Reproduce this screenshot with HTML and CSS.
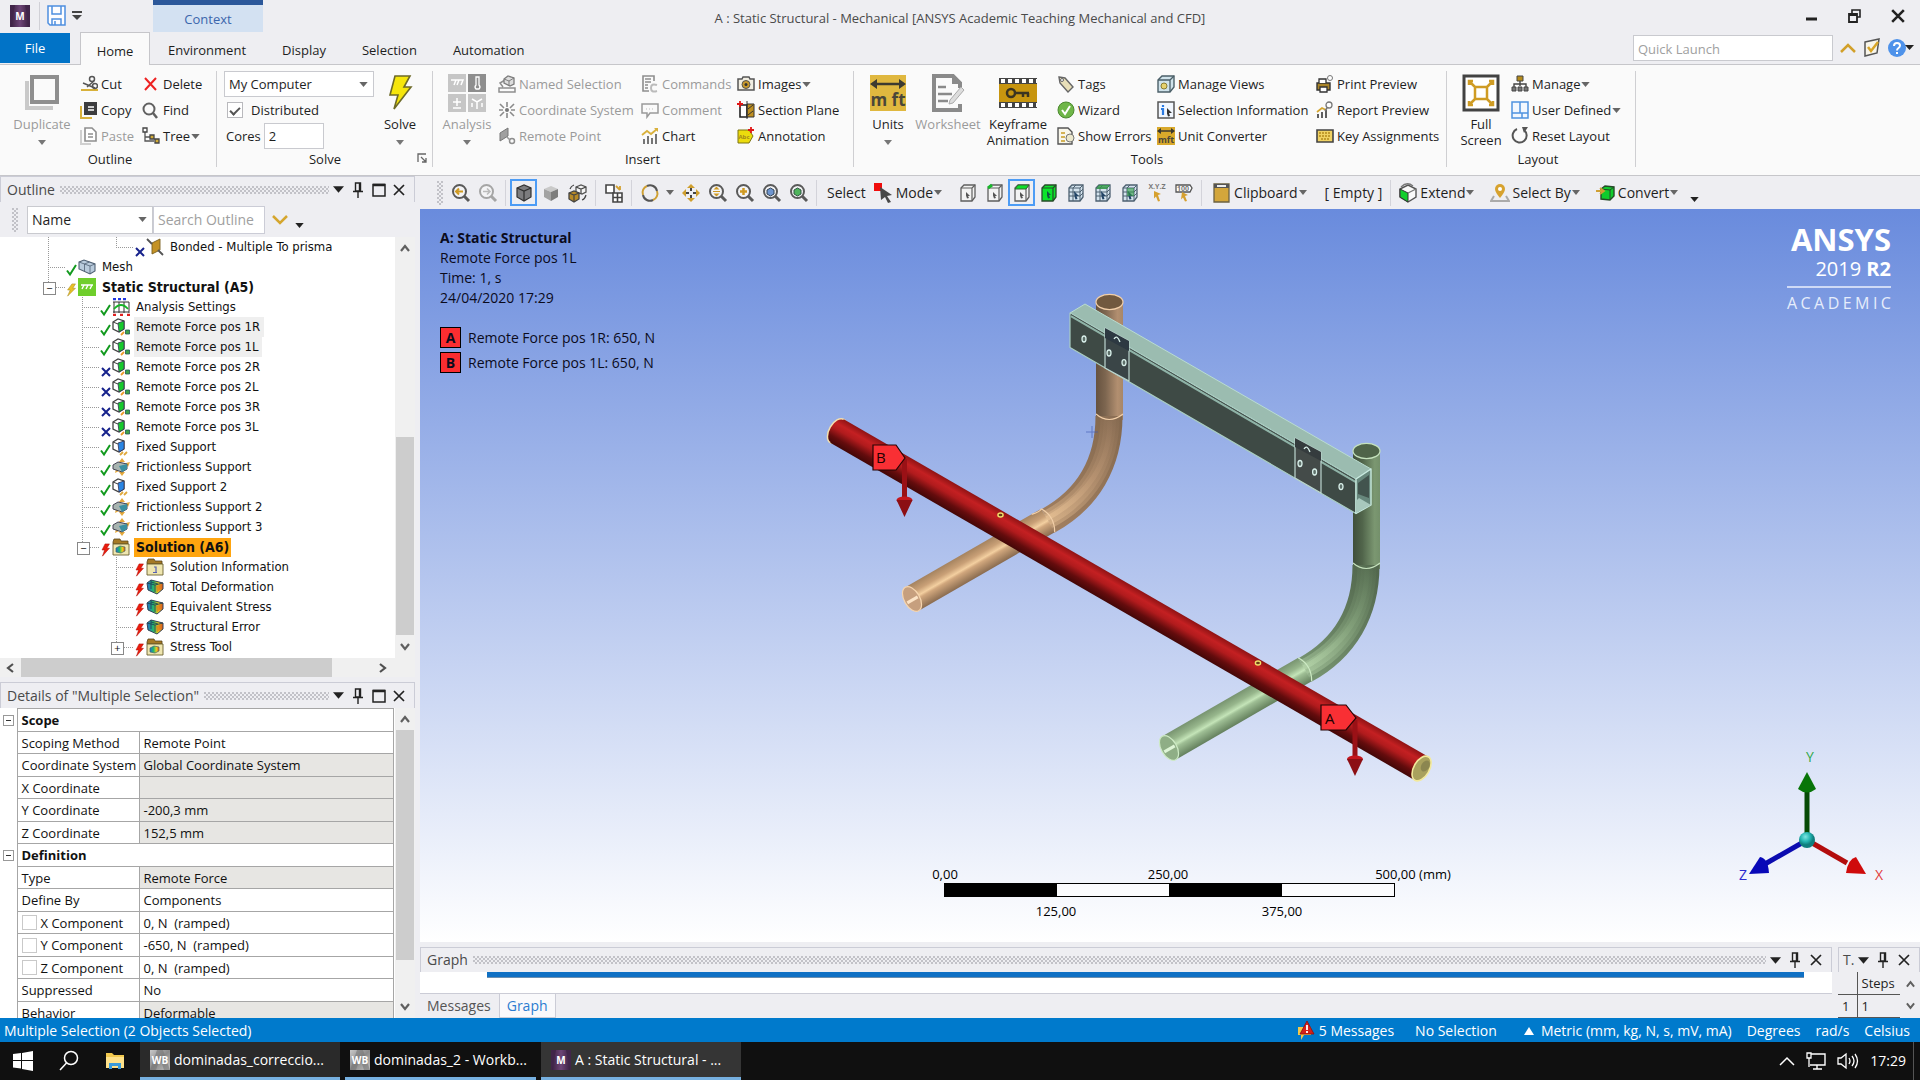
FILE: index.html
```html
<!DOCTYPE html>
<html lang="en">
<head>
<meta charset="utf-8">
<title>A : Static Structural - Mechanical</title>
<link rel="stylesheet" href="styles.css">
</head>
<body>
<svg class="sprite" aria-hidden="true">
  <defs>
    <linearGradient id="purple" x1="0" x2="1"><stop offset="0" stop-color="#3b2142"/><stop offset=".5" stop-color="#6d4577"/><stop offset="1" stop-color="#3b2142"/></linearGradient>
    <linearGradient id="rainbow" x1="0" x2="1"><stop offset="0" stop-color="#1c6fd0"/><stop offset=".4" stop-color="#25b86a"/><stop offset=".7" stop-color="#e8d21c"/><stop offset="1" stop-color="#e0521b"/></linearGradient>
    <linearGradient id="wbg" x1="0" x2="1" y2="1"><stop offset="0" stop-color="#c9c9c9"/><stop offset=".5" stop-color="#8a8a8a"/><stop offset="1" stop-color="#c2c2c2"/></linearGradient>
  </defs>
  <symbol id="down" viewBox="0 0 10 6"><path d="M0 0h10L5 6z" fill="currentColor"/></symbol>
  <symbol id="pin" viewBox="0 0 10 16"><path d="M2.500 1h5v8h-5zM0 9.500h10M5 10v6M6.500 1v8" fill="none" stroke="#222" stroke-width="1.400"/></symbol>
  <symbol id="max" viewBox="0 0 14 14"><path d="M1 1.500h12v11.500H1z" fill="none" stroke="#222" stroke-width="1.500"/><path d="M1 2h12" stroke="#222" stroke-width="2.500"/></symbol>
  <symbol id="close" viewBox="0 0 12 12"><path d="M1 1l10 10M11 1L1 11" stroke="#222" stroke-width="1.700"/></symbol>
  <symbol id="up-c" viewBox="0 0 10 8"><path d="M1 7l4-5 4 5" fill="none" stroke="#606060" stroke-width="2.200"/></symbol>
  <symbol id="dn-c" viewBox="0 0 10 8"><path d="M1 1l4 5 4-5" fill="none" stroke="#606060" stroke-width="2.200"/></symbol>
  <symbol id="lf-c" viewBox="0 0 8 10"><path d="M7 1L2 5l5 4" fill="none" stroke="#505050" stroke-width="2.200"/></symbol>
  <symbol id="rt-c" viewBox="0 0 8 10"><path d="M1 1l5 4-5 4" fill="none" stroke="#505050" stroke-width="2.200"/></symbol>
  <symbol id="ok" viewBox="0 0 11 12"><path d="M1 6.500l3 4L10 1" fill="none" stroke="#129a1e" stroke-width="2"/></symbol>
  <symbol id="no" viewBox="0 0 11 12"><path d="M2 4l8 8M10 4l-8 8" stroke="#17228c" stroke-width="2"/></symbol>
  <symbol id="redbolt" viewBox="0 0 11 16"><path d="M5 1h5L7 6h3L2 15l2.500-7H1.500z" fill="#ea1c0d" stroke="#b01208" stroke-width=".6"/></symbol>
  <symbol id="yelbolt" viewBox="0 0 11 16"><path d="M6 1h4L7 6h3L1 15l3-7H1z" fill="#e9c027" stroke="#a68a22" stroke-width=".6"/></symbol>
  <symbol id="rforce" viewBox="0 0 18 18"><path d="M1 4l5-3 6 2v8l-5 3-6-3z" fill="#fff" stroke="#444" stroke-width="1.300"/><path d="M6 5l6-2v8l-5 3z" fill="#16c92c" stroke="#335" stroke-width=".8"/><path d="M1 4l5 2" stroke="#444"/><path d="M13.500 12h4v4h-4z" fill="#3da64a" stroke="#255" stroke-width=".8"/><path d="M9 17l3-3" stroke="#eb9b2c" stroke-width="1.800"/></symbol>
  <symbol id="fixed" viewBox="0 0 18 18"><path d="M1 4l5-3 6 2v8l-5 3-6-3z" fill="#fff" stroke="#444" stroke-width="1.300"/><path d="M6 5l6-2v8l-5 3z" fill="#2a86e4" stroke="#335" stroke-width=".8"/><path d="M1 4l5 2" stroke="#444"/><path d="M8 17l3-3m1 3l3-3" stroke="#e0a93c" stroke-width="1.800"/></symbol>
  <symbol id="frict" viewBox="0 0 18 18"><path d="M10 0l3 4H7zM10 18l3-4H7zM18 4l-4 1L16 9zM3 15l4-2-3-2z" fill="#e5a93b"/><path d="M1 7l5-3 9 2v5l-5 3-9-3z" fill="#a8b4b0" stroke="#445" stroke-width="1"/><path d="M7 8l8-2v5l-5 3z" fill="#3a8fa0"/></symbol>
  <symbol id="folder" viewBox="0 0 18 18"><path d="M1 4l1-3h6l1 2h7v3H1z" fill="#a57a25" stroke="#59451c" stroke-width=".8"/><path d="M1 6h16v11H1z" fill="#efe6b0" stroke="#6c612f" stroke-width=".9"/></symbol>
  <symbol id="folderc" viewBox="0 0 18 18"><use href="#folder"/><path d="M4 10l4-2 5 1v4l-4 2-5-1z" fill="url(#rainbow)" stroke="#466" stroke-width=".7"/></symbol>
  <symbol id="folderi" viewBox="0 0 18 18"><use href="#folder"/><path d="M8 9h2v5M7 14.500h4" fill="none" stroke="#5660b0" stroke-width="1.200"/></symbol>
  <symbol id="result" viewBox="0 0 18 18"><path d="M1 5l4-3 12 3v6l-6 5-9-4z" fill="url(#rainbow)" stroke="#345" stroke-width="1"/><path d="M9 7l8-2M9 7v7M1 5l8 2M5 2v9M5 4l7 2" fill="none" stroke="#245" stroke-width=".9"/><path d="M10 8l6-2v4l-5 4z" fill="#dd6b1d" opacity=".65"/></symbol>
  <symbol id="mesh" viewBox="0 0 18 18"><path d="M1 4l5-2 11 4v7l-5 3L1 11z" fill="#b9cbdc" stroke="#4f6073" stroke-width="1.100"/><path d="M1 4l11 4 5-2M12 8v8M6.500 6v7M6.500 6l5-2" fill="none" stroke="#4f6073" stroke-width=".8"/></symbol>
  <symbol id="bond" viewBox="0 0 18 18"><path d="M6 5l8-4v11l-8 4z" fill="#c49225" stroke="#7b601f" stroke-width=".9"/><path d="M1 1l5 5M12 12l5 5" stroke="#555" stroke-width="1.800"/></symbol>
  <symbol id="static" viewBox="0 0 18 18"><path d="M0 0h18v18H0z" fill="#6fce2c"/><path d="M3 7h12M4 11l2-4m2 4l2-4m2 4l2-4" fill="none" stroke="#fff" stroke-width="1.400"/></symbol>
  <symbol id="aset" viewBox="0 0 18 18"><path d="M2 4v11M7 4v11M12 4v11M17 4v11M1 4h16M1 14h16" stroke="#333" stroke-width="1"/><path d="M2 11q7-8 14 0" fill="none" stroke="#16b328" stroke-width="1.800"/><path d="M1 1h3M6 1h3M11 1h3" stroke="#2036e0" stroke-width="2.500"/><path d="M1 17h3M8 17h3M15 17h3" stroke="#e02020" stroke-width="2.500"/></symbol>
  <symbol id="mag" viewBox="0 0 20 20"><circle cx="8.500" cy="8.500" r="6.500" fill="#f4f4f6" stroke="currentColor" stroke-width="2"/><path d="M13 13l5 5" stroke="currentColor" stroke-width="3"/></symbol>
  <symbol id="cube" viewBox="0 0 20 20"><path d="M3 5l7-3 7 3v9l-7 4-7-4z" fill="#7c7c7e" stroke="#333" stroke-width="1.200"/><path d="M3 5l7 3 7-3M10 8v10" fill="none" stroke="#2f2f2f" stroke-width="1.200"/></symbol>
  <symbol id="selcube" viewBox="0 0 20 20"><path d="M3 5l3-3h11v12l-3 4H3z" fill="#f3f3f3" stroke="#5f5f5f" stroke-width="1.300"/><path d="M3 5h11v13M14 5l3-3" fill="none" stroke="#5f5f5f" stroke-width="1.200"/><path d="M8 9l4 4h-2l1 2-2 .5-1-3z" fill="#555"/></symbol>
  <symbol id="meshcube" viewBox="0 0 20 20"><path d="M3 5l3-3h11v12l-3 4H3z" fill="#d4e3ee" stroke="#4d6070" stroke-width="1.300"/><path d="M3 5h11v13M14 5l3-3M7 5v13M3 9h11l3-3M3 13h11l3-3M7 5l3-3" fill="none" stroke="#4d6070" stroke-width="1"/><path d="M8 8l5 5H10.500l1 3-2 .5-1-3z" fill="#246"/></symbol>
</svg>

<header class="titlebar">
  <svg class="app-icon" viewBox="0 0 20 22"><path d="M0 0h20v22H0z" fill="#41254a"/><path d="M5 0h10l4 22H1z" fill="url(#purple)"/><text x="10" y="15" class="mark">M</text></svg>
  <span class="tb-sep"></span>
  <button class="plain" aria-label="Save"><svg width="19" height="22" viewBox="0 0 19 22"><path d="M1 1h17v19H3l-2-2z" fill="#fdfdff" stroke="#4e8fe0" stroke-width="1.500"/><path d="M5 1v8h9V1M5 20v-6h9v6M8 16v4" fill="none" stroke="#4e8fe0" stroke-width="1.500"/></svg></button>
  <button class="plain qat" aria-label="Customize"><svg width="10" height="10" viewBox="0 0 10 10"><path d="M0 1h10" stroke="#444" stroke-width="2"/><path d="M0 4h10L5 9z" fill="#444"/></svg></button>
  <div class="context-tab">Context</div>
  <h1>A : Static Structural - Mechanical [ANSYS Academic Teaching Mechanical and CFD]</h1>
  <div class="winbtns">
    <button class="plain" aria-label="Minimize"><svg width="12" height="16" viewBox="0 0 12 16"><path d="M0 11h11" stroke="#222" stroke-width="3"/></svg></button>
    <button class="plain" aria-label="Restore"><svg width="13" height="14" viewBox="0 0 13 14"><path d="M4 4V1h8v7H9" fill="none" stroke="#222" stroke-width="1.600"/><path d="M1 5h8v8H1zM1 6h8" fill="none" stroke="#222" stroke-width="1.800"/></svg></button>
    <button class="plain" aria-label="Close"><svg width="14" height="14" viewBox="0 0 12 12"><path d="M1 1l10 10M11 1L1 11" stroke="#222" stroke-width="2.200"/></svg></button>
  </div>
</header>

<nav class="tabs">
  <button class="file">File</button>
  <button class="tab active">Home</button>
  <button class="tab">Environment</button>
  <button class="tab">Display</button>
  <button class="tab">Selection</button>
  <button class="tab">Automation</button>
  <div class="quick">
    <input type="text" placeholder="Quick Launch" aria-label="Quick Launch">
    <button class="plain" aria-label="Collapse ribbon"><svg width="16" height="10" viewBox="0 0 16 10"><path d="M1 9l7-7 7 7" fill="none" stroke="#d2a02a" stroke-width="2.500"/></svg></button>
    <button class="plain" aria-label="Tasks"><svg width="18" height="20" viewBox="0 0 18 20"><path d="M2 4l14-3-2 14-12 3z" fill="#f8f5ea" stroke="#555" stroke-width="1.500"/><path d="M5 9l3 4 7-9" fill="none" stroke="#d8a528" stroke-width="2.500"/></svg></button>
    <button class="plain help" aria-label="Help"><svg width="26" height="20" viewBox="0 0 26 20"><circle cx="9" cy="10" r="9" fill="#4e92ea"/><path d="M6 8q0-3 3-3t3 2.500q0 1.500-1.500 2.500T9 12.500M9 14v2" fill="none" stroke="#fff" stroke-width="2"/><path d="M17 7h9l-4.500 5z" fill="#222"/></svg></button>
  </div>
</nav>

<section class="ribbon">
  <div class="group g-outline">
    <div class="cols">
      <button class="big off"><svg width="36" height="36" viewBox="0 0 36 36"><path d="M3 6v27h26" fill="none" stroke="#c9c9c9" stroke-width="4"/><path d="M8 2h25v25H8z" fill="#fafafa" stroke="#8e8e8e" stroke-width="4"/></svg><span>Duplicate</span><svg class="dn"><use href="#down"/></svg></button>
      <div class="col">
        <button class="item"><svg class="ic" viewBox="0 0 18 18"><path d="M1 15h17" stroke="#d8b13a" stroke-width="2"/><path d="M3 8l12 5M14 6L7 12" stroke="#555" stroke-width="1.500"/><circle cx="12" cy="4" r="2.500" fill="none" stroke="#555" stroke-width="1.500"/><circle cx="15" cy="11" r="2.500" fill="none" stroke="#555" stroke-width="1.500"/></svg>Cut</button>
        <button class="item"><svg class="ic" viewBox="0 0 18 18"><path d="M1 5v12h11" fill="none" stroke="#d8b13a" stroke-width="2"/><path d="M4 1h13v13H4z" fill="#3c3c3e"/><path d="M8 6h6M8 9h6" stroke="#fff" stroke-width="1.500"/></svg>Copy</button>
        <button class="item off"><svg class="ic" viewBox="0 0 18 18"><path d="M1 3v14h10" fill="none" stroke="#cfcfcf" stroke-width="2"/><path d="M5 1h7l4 4v9H5z" fill="#fff" stroke="#8e8e8e" stroke-width="1.600"/><path d="M8 7h5M8 10h5" stroke="#8e8e8e" stroke-width="1.400"/></svg>Paste</button>
      </div>
      <div class="col">
        <button class="item"><svg class="ic" viewBox="0 0 18 18"><path d="M3 3l11 12M14 3L3 15" stroke="#ee2222" stroke-width="2"/></svg>Delete</button>
        <button class="item"><svg class="ic" viewBox="0 0 18 18"><circle cx="7" cy="8" r="5.500" fill="none" stroke="#606060" stroke-width="2"/><path d="M11 12l4 5" stroke="#606060" stroke-width="2.500"/></svg>Find</button>
        <button class="item"><svg class="ic" viewBox="0 0 18 18"><path d="M3 5v9h9M3 10h5" fill="none" stroke="#555" stroke-width="1.300"/><path d="M1 1h4v4H1z" fill="#fff" stroke="#444" stroke-width="1.300"/><path d="M8 8h4v4H8zM13 12h4v4h-4z" fill="#d1ab36" stroke="#444" stroke-width="1.300"/></svg>Tree<svg class="sm"><use href="#down"/></svg></button>
      </div>
    </div>
    <h2>Outline</h2>
  </div>
  <div class="group g-solve">
    <div class="cols">
      <div class="col form">
        <div class="selwrap"><select aria-label="Solve target"><option>My Computer</option></select><svg class="sm"><use href="#down"/></svg></div>
        <label class="check"><input type="checkbox" checked>Distributed</label>
        <label class="cores">Cores<input type="text" value="2"></label>
      </div>
      <button class="big"><svg width="26" height="36" viewBox="0 0 26 36"><path d="M8 1h15l-6 11h7L7 34l4-14H3z" fill="#f6e60c" stroke="#6d6a28" stroke-width="1.600"/></svg><span>Solve</span><svg class="dn"><use href="#down"/></svg></button>
    </div>
    <h2>Solve</h2>
    <svg class="launch" width="10" height="10" viewBox="0 0 10 10"><path d="M1 9V1h8M4 4l5 5M9 5v4H5" fill="none" stroke="#666" stroke-width="1.300"/></svg>
  </div>
  <div class="group g-insert">
    <div class="cols">
      <button class="big off"><svg width="38" height="38" viewBox="0 0 38 38"><path d="M0 0h18v18H0zM0 20h18v18H0zM20 20h18v18H20z" fill="#c6c6c6"/><path d="M20 0h18v18H20z" fill="#8e8e8e"/><path d="M3 6h12l-2 5M6 11l2-5m1 5l2-5M9 24v8M5 28h8M5 34h8M24 25l5 3 5-3M29 28v7M24 29v4M34 29v4" fill="none" stroke="#fff" stroke-width="1.500"/><path d="M28 3h3v8q2 2 0 4h-3q-2-2 0-4z" fill="none" stroke="#fff" stroke-width="1.300"/></svg><span>Analysis</span><svg class="dn"><use href="#down"/></svg></button>
      <div class="col off">
        <button class="item"><svg class="ic" viewBox="0 0 18 18"><path d="M1 13h16v4H1zM5 12L2 8l5-3" fill="none" stroke="#8e8e8e" stroke-width="1.500"/><path d="M6 4l4-3 6 2v6l-4 2-6-3z" fill="#ddd" stroke="#7d7d7d" stroke-width="1.300"/><path d="M6 4l5 2 5-3M11 6v5" fill="none" stroke="#7d7d7d"/></svg>Named Selection</button>
        <button class="item"><svg class="ic" viewBox="0 0 18 18"><path d="M9 1v5M9 12v5M2 3l4 4M12 11l4 4M16 3l-4 4M6 11l-4 4M1 9h4M13 9h4" stroke="#8a8a8a" stroke-width="1.600"/><circle cx="9" cy="9" r="2" fill="#777"/></svg>Coordinate System</button>
        <button class="item"><svg class="ic" viewBox="0 0 18 18"><path d="M2 6l8-5v8l-8 5z" fill="#a0a0a0" stroke="#777"/><circle cx="14" cy="14" r="2.500" fill="none" stroke="#8e8e8e" stroke-width="1.500"/><path d="M9 10l3 3" stroke="#999" stroke-width="1.500"/></svg>Remote Point</button>
      </div>
      <div class="col">
        <button class="item off"><svg class="ic" viewBox="0 0 18 18"><path d="M13 6V1H2v15h6" fill="none" stroke="#8e8e8e" stroke-width="1.600"/><path d="M4 4h6M4 7h6M4 10h3M4 13h3" stroke="#8e8e8e" stroke-width="1.400"/><path d="M16 10q-6-2-6 3t6 3" fill="none" stroke="#bbb" stroke-width="2"/></svg>Commands</button>
        <button class="item off"><svg class="ic" viewBox="0 0 18 18"><path d="M1 3h16v9H9l-3 4v-4H1z" fill="none" stroke="#9a9a9a" stroke-width="1.500"/><path d="M5 8h8" stroke="#bbb" stroke-dasharray="1 2"/></svg>Comment</button>
        <button class="item"><svg class="ic" viewBox="0 0 18 18"><path d="M1 8l5-4 4 3 6-5" fill="none" stroke="#d9b13c" stroke-width="1.800"/><path d="M13 1h4v4z" fill="#d9b13c"/><path d="M3 17v-5M7 17V9M11 17v-6M15 17V7" stroke="#555" stroke-width="1.600"/></svg>Chart</button>
      </div>
      <div class="col">
        <button class="item"><svg class="ic" viewBox="0 0 18 18"><path d="M1 4h4l1-2h6l1 2h4v11H1z" fill="#f1eee2" stroke="#555" stroke-width="1.500"/><circle cx="9" cy="9.500" r="4" fill="#c9992a" stroke="#555"/><circle cx="9" cy="9.500" r="1.500" fill="#333"/></svg>Images<svg class="sm"><use href="#down"/></svg></button>
        <button class="item"><svg class="ic" viewBox="0 0 18 18"><path d="M3 4h7v12H3z" fill="#fff" stroke="#222" stroke-width="1.600"/><path d="M10 3h7v13h-7z" fill="#c09021" stroke="#333"/><path d="M10 0v18M11 8l5-4M11 14l5-4" stroke="#333"/><path d="M3 0v6M0 3h6" stroke="#e01818" stroke-width="1.800"/></svg>Section Plane</button>
        <button class="item"><svg class="ic" viewBox="0 0 18 18"><path d="M1 3h11l4 6-4 7H1z" fill="#ecdc0d" stroke="#7c7412"/><text x="7" y="12" class="abc">Abc</text><path d="M14 0v6M11 3h6" stroke="#e01818" stroke-width="1.800"/></svg>Annotation</button>
      </div>
    </div>
    <h2>Insert</h2>
  </div>
  <div class="group g-tools">
    <div class="cols">
      <button class="big"><svg width="36" height="36" viewBox="0 0 36 36"><path d="M0 0h36v36H0z" fill="#e0b83f"/><path d="M4 9h28" stroke="#3c3a30" stroke-width="2.500"/><path d="M0 9l7-5v10zM36 9l-7-5v10z" fill="#3c3a30"/><text x="18" y="31" class="mft">m ft</text></svg><span>Units</span><svg class="dn"><use href="#down"/></svg></button>
      <button class="big off"><svg width="36" height="38" viewBox="0 0 36 38"><path d="M30 14V9l-7-7H4v34h26v-6" fill="none" stroke="#8a8a8a" stroke-width="4"/><path d="M22 1v9h8" fill="#8a8a8a"/><path d="M8 13h8M8 20h14M8 27h10" stroke="#8a8a8a" stroke-width="2.500"/><path d="M20 26l11-13 3 3-11 13-4 1z" fill="#ddd" stroke="#aaa"/></svg><span>Worksheet</span></button>
      <button class="big"><svg width="38" height="38" viewBox="0 0 38 38"><path d="M0 4h38v30H0z" fill="#444"/><path d="M0 10h38v18H0z" fill="#c7950f"/><path d="M2 7h36M2 31h36" stroke="#fff" stroke-width="4" stroke-dasharray="4 3"/><circle cx="12" cy="19" r="4" fill="none" stroke="#3b3420" stroke-width="2.500"/><path d="M16 19h14M24 19v4M29 19v4" stroke="#3b3420" stroke-width="2.500"/></svg><span>Keyframe<br>Animation</span></button>
      <div class="col">
        <button class="item"><svg class="ic" viewBox="0 0 18 18"><path d="M2 2l6 1 8 9-5 5-8-9z" fill="#e8dfb8" stroke="#666" stroke-width="1.400"/><circle cx="5" cy="5" r="1.500" fill="#fff" stroke="#666"/></svg>Tags</button>
        <button class="item"><svg class="ic" viewBox="0 0 18 18"><circle cx="9" cy="9" r="8" fill="#6fb648" stroke="#4c8a30"/><path d="M5 9l3 4 5-8" fill="none" stroke="#fff" stroke-width="2"/></svg>Wizard</button>
        <button class="item"><svg class="ic" viewBox="0 0 18 18"><path d="M1 1h10l4 4v12H1z" fill="#f8f6ea" stroke="#555" stroke-width="1.400"/><path d="M4 6h4M4 10h4M4 14h4" stroke="#c79c25" stroke-width="1.600"/><circle cx="13" cy="11" r="4" fill="#ece8cd" stroke="#777"/></svg>Show Errors</button>
      </div>
      <div class="col">
        <button class="item"><svg class="ic" viewBox="0 0 18 18"><path d="M1 5l4-4h12v11l-4 5H1z" fill="#cfe2ea" stroke="#4b5f68" stroke-width="1.400"/><path d="M1 5h12v12M13 5l4-4" fill="none" stroke="#4b5f68" stroke-width="1.300"/><circle cx="7" cy="11" r="3" fill="#e6d26e" stroke="#8c7c2e"/></svg>Manage Views</button>
        <button class="item"><svg class="ic" viewBox="0 0 18 18"><path d="M1 1h16v16H1z" fill="#f1f6fd" stroke="#555" stroke-width="1.500"/><path d="M4 8h2v6M6 4v2" fill="none" stroke="#2b7ae0" stroke-width="2.200"/><path d="M10 7l5 5h-3l1 3-2 .5-1-3z" fill="#333"/></svg>Selection Information</button>
        <button class="item"><svg class="ic" viewBox="0 0 18 18"><path d="M0 0h18v18H0z" fill="#d9a92b"/><path d="M3 4h12" stroke="#3c3a30" stroke-width="1.500"/><path d="M0 4l4-3v6zM18 4l-4-3v6z" fill="#3c3a30"/><text x="9" y="16" class="mft-s">mft</text></svg>Unit Converter</button>
      </div>
      <div class="col">
        <button class="item"><svg class="ic" viewBox="0 0 18 18"><path d="M1 8h13v7H1z" fill="#a98428" stroke="#333" stroke-width="1.400"/><path d="M3 8V4h7v4M4 12h7v5H4z" fill="#fff" stroke="#333" stroke-width="1.300"/><circle cx="14" cy="3" r="2.500" fill="#fff" stroke="#777"/></svg>Print Preview</button>
        <button class="item"><svg class="ic" viewBox="0 0 18 18"><path d="M2 17v-4M6 17v-6M10 17V9" stroke="#444" stroke-width="1.700"/><path d="M1 11l5-4 4 2" fill="none" stroke="#d3a52f" stroke-width="1.700"/><circle cx="13" cy="4" r="3" fill="#fff" stroke="#777" stroke-width="1.300"/><path d="M11 7l-2 3" stroke="#777" stroke-width="1.500"/></svg>Report Preview</button>
        <button class="item"><svg class="ic" viewBox="0 0 18 18"><path d="M1 3h16v12H1z" fill="#f0d263" stroke="#444" stroke-width="1.600"/><path d="M3 6h12M3 9h12M5 12h8" stroke="#b48b1c" stroke-width="1.500" stroke-dasharray="2 1"/></svg>Key Assignments</button>
      </div>
    </div>
    <h2>Tools</h2>
  </div>
  <div class="group g-layout">
    <div class="cols">
      <button class="big"><svg width="38" height="38" viewBox="0 0 38 38"><path d="M2 2h34v34H2z" fill="#fff" stroke="#424242" stroke-width="3"/><path d="M13 13h12v12H13zM13 13L8 8M25 13l5-5M13 25l-5 5M25 25l5 5M7 11V7h4M27 7h4v4M7 27v4h4M27 31h4v-4" fill="none" stroke="#cf9c24" stroke-width="2.500"/></svg><span>Full<br>Screen</span></button>
      <div class="col">
        <button class="item"><svg class="ic" viewBox="0 0 18 18"><path d="M9 5v6M3 13V9h12v4" fill="none" stroke="#444" stroke-width="1.400"/><path d="M6 1h6v5H6z" fill="#b58b1a" stroke="#444"/><path d="M1 12h4v4H1zM7 12h4v4H7zM13 12h4v4h-4z" fill="#777" stroke="#444"/></svg>Manage<svg class="sm"><use href="#down"/></svg></button>
        <button class="item"><svg class="ic" viewBox="0 0 18 18"><path d="M1 1h16v16H1zM9 1v11M1 12h16M11 12v5" fill="#f2f7fe" stroke="#4f92e0" stroke-width="1.500"/></svg>User Defined<svg class="sm"><use href="#down"/></svg></button>
        <button class="item"><svg class="ic" viewBox="0 0 18 18"><path d="M6 2a7 7 0 1 0 7 1" fill="none" stroke="#555" stroke-width="2"/><path d="M11 0h6l-4 6z" fill="#555"/></svg>Reset Layout</button>
      </div>
    </div>
    <h2>Layout</h2>
  </div>
</section>

<main class="work">
  <aside class="left">
    <section class="outline">
      <div class="phead"><span>Outline</span><i class="dots"></i><svg class="h-dn"><use href="#down"/></svg><svg class="h-pin"><use href="#pin"/></svg><svg class="h-max"><use href="#max"/></svg><svg class="h-x"><use href="#close"/></svg></div>
      <div class="filter">
        <i class="grip"></i>
        <div class="selwrap"><select aria-label="Filter by"><option>Name</option></select><svg class="sm"><use href="#down"/></svg></div>
        <input type="text" placeholder="Search Outline" aria-label="Search Outline">
        <svg width="16" height="10" viewBox="0 0 16 10"><path d="M1 1l7 7 7-7" fill="none" stroke="#d5a62e" stroke-width="2.500"/></svg>
        <svg class="more"><use href="#down"/></svg>
      </div>
      <div class="treewrap">
        <div class="tree">
          <div class="row"><i class="g v"></i><i class="g"></i><i class="t e"></i><svg class="st"><use href="#no"/></svg><svg class="ic"><use href="#bond"/></svg><span>Bonded - Multiple To prisma</span></div>
          <div class="row"><i class="t"></i><svg class="st"><use href="#ok"/></svg><svg class="ic"><use href="#mesh"/></svg><span>Mesh</span></div>
          <div class="row"><i class="t e x"></i><svg class="st"><use href="#yelbolt"/></svg><svg class="ic"><use href="#static"/></svg><span class="b">Static Structural (A5)</span></div>
          <div class="row"><i class="g"></i><i class="t"></i><svg class="st"><use href="#ok"/></svg><svg class="ic"><use href="#aset"/></svg><span>Analysis Settings</span></div>
          <div class="row"><i class="g"></i><i class="t"></i><svg class="st"><use href="#ok"/></svg><svg class="ic"><use href="#rforce"/></svg><span class="hl">Remote Force pos 1R</span></div>
          <div class="row"><i class="g"></i><i class="t"></i><svg class="st"><use href="#ok"/></svg><svg class="ic"><use href="#rforce"/></svg><span class="hl">Remote Force pos 1L</span></div>
          <div class="row"><i class="g"></i><i class="t"></i><svg class="st"><use href="#no"/></svg><svg class="ic"><use href="#rforce"/></svg><span>Remote Force pos 2R</span></div>
          <div class="row"><i class="g"></i><i class="t"></i><svg class="st"><use href="#no"/></svg><svg class="ic"><use href="#rforce"/></svg><span>Remote Force pos 2L</span></div>
          <div class="row"><i class="g"></i><i class="t"></i><svg class="st"><use href="#no"/></svg><svg class="ic"><use href="#rforce"/></svg><span>Remote Force pos 3R</span></div>
          <div class="row"><i class="g"></i><i class="t"></i><svg class="st"><use href="#no"/></svg><svg class="ic"><use href="#rforce"/></svg><span>Remote Force pos 3L</span></div>
          <div class="row"><i class="g"></i><i class="t"></i><svg class="st"><use href="#ok"/></svg><svg class="ic"><use href="#fixed"/></svg><span>Fixed Support</span></div>
          <div class="row"><i class="g"></i><i class="t"></i><svg class="st"><use href="#ok"/></svg><svg class="ic"><use href="#frict"/></svg><span>Frictionless Support</span></div>
          <div class="row"><i class="g"></i><i class="t"></i><svg class="st"><use href="#ok"/></svg><svg class="ic"><use href="#fixed"/></svg><span>Fixed Support 2</span></div>
          <div class="row"><i class="g"></i><i class="t"></i><svg class="st"><use href="#ok"/></svg><svg class="ic"><use href="#frict"/></svg><span>Frictionless Support 2</span></div>
          <div class="row"><i class="g"></i><i class="t"></i><svg class="st"><use href="#ok"/></svg><svg class="ic"><use href="#frict"/></svg><span>Frictionless Support 3</span></div>
          <div class="row"><i class="g"></i><i class="t e x"></i><svg class="st"><use href="#redbolt"/></svg><svg class="ic"><use href="#folderc"/></svg><span class="b cur">Solution (A6)</span></div>
          <div class="row"><i class="g"></i><i class="g"></i><i class="t"></i><svg class="st"><use href="#redbolt"/></svg><svg class="ic"><use href="#folderi"/></svg><span>Solution Information</span></div>
          <div class="row"><i class="g"></i><i class="g"></i><i class="t"></i><svg class="st"><use href="#redbolt"/></svg><svg class="ic"><use href="#result"/></svg><span>Total Deformation</span></div>
          <div class="row"><i class="g"></i><i class="g"></i><i class="t"></i><svg class="st"><use href="#redbolt"/></svg><svg class="ic"><use href="#result"/></svg><span>Equivalent Stress</span></div>
          <div class="row"><i class="g"></i><i class="g"></i><i class="t"></i><svg class="st"><use href="#redbolt"/></svg><svg class="ic"><use href="#result"/></svg><span>Structural Error</span></div>
          <div class="row"><i class="g"></i><i class="g"></i><i class="t e x plus"></i><svg class="st"><use href="#redbolt"/></svg><svg class="ic"><use href="#folderc"/></svg><span>Stress Tool</span></div>
        </div>
        <div class="vbar low"><svg><use href="#up-c"/></svg><i></i><svg><use href="#dn-c"/></svg></div>
      </div>
      <div class="hbar"><svg><use href="#lf-c"/></svg><i></i><svg><use href="#rt-c"/></svg></div>
    </section>

    <section class="details">
      <div class="phead"><span>Details of "Multiple Selection"</span><i class="dots"></i><svg class="h-dn"><use href="#down"/></svg><svg class="h-pin"><use href="#pin"/></svg><svg class="h-max"><use href="#max"/></svg><svg class="h-x"><use href="#close"/></svg></div>
      <div class="gridwrap">
        <div class="gridclip">
        <table class="props">
          <colgroup><col class="c0"><col class="c1"><col></colgroup>
          <tr><td class="gut"><i class="box"></i></td><th colspan="2">Scope</th></tr>
          <tr><td class="gut"></td><td>Scoping Method</td><td>Remote Point</td></tr>
          <tr><td class="gut"></td><td>Coordinate System</td><td class="ro">Global Coordinate System</td></tr>
          <tr><td class="gut"></td><td>X Coordinate</td><td class="ro"></td></tr>
          <tr><td class="gut"></td><td>Y Coordinate</td><td class="ro">-200,3 mm</td></tr>
          <tr><td class="gut"></td><td>Z Coordinate</td><td class="ro">152,5 mm</td></tr>
          <tr><td class="gut"><i class="box"></i></td><th colspan="2">Definition</th></tr>
          <tr><td class="gut"></td><td>Type</td><td class="ro">Remote Force</td></tr>
          <tr><td class="gut"></td><td>Define By</td><td>Components</td></tr>
          <tr><td class="gut"></td><td><label><input type="checkbox">X Component</label></td><td>0, N&nbsp; (ramped)</td></tr>
          <tr><td class="gut"></td><td><label><input type="checkbox">Y Component</label></td><td>-650, N&nbsp; (ramped)</td></tr>
          <tr><td class="gut"></td><td><label><input type="checkbox">Z Component</label></td><td>0, N&nbsp; (ramped)</td></tr>
          <tr><td class="gut"></td><td>Suppressed</td><td>No</td></tr>
          <tr><td class="gut"></td><td>Behavior</td><td class="ro">Deformable</td></tr>
        </table>
        </div>
        <div class="vbar high"><svg><use href="#up-c"/></svg><i></i><svg><use href="#dn-c"/></svg></div>
      </div>
    </section>
  </aside>

  <section class="right">
    <div class="toolbar">
      <i class="grip"></i>
      <button class="tool" aria-label="Previous view"><svg viewBox="0 0 20 20" color="#5a5a5a"><use href="#mag"/><path d="M5 8.500h7M8 5.500l-3 3 3 3" fill="none" stroke="#cf9a22" stroke-width="2"/></svg></button>
      <button class="tool" aria-label="Next view"><svg viewBox="0 0 20 20" color="#a5a5a5"><use href="#mag"/><path d="M5 8.500h7M9 5.500l3 3-3 3" fill="none" stroke="#bbb" stroke-width="1.500"/></svg></button>
      <i class="s"></i>
      <button class="tool on" aria-label="Shaded with edges"><svg><use href="#cube"/></svg></button>
      <button class="tool" aria-label="Shaded"><svg viewBox="0 0 20 20"><path d="M3 6l7-3 7 3-7 3z" fill="#c9c9c9"/><path d="M3 6l7 3v9l-7-4z" fill="#a3a3a3"/><path d="M17 6l-7 3v9l7-4z" fill="#7d7d7d"/></svg></button>
      <button class="tool" aria-label="Rotate object"><svg viewBox="0 0 20 20"><path d="M8 4l5-2 5 2v5l-4 2-6-2z" fill="#f5f5f5" stroke="#555" stroke-width="1.300"/><path d="M1 10l5-2 5 2v6l-5 3-5-3z" fill="#b88a26" stroke="#444" stroke-width="1.300"/><path d="M1 10l5 2 5-2M6 12v7M8 4l5 2 5-2M13 6v5M2 6q1-3 4-4M18 12q-1 4-4 5" fill="none" stroke="#444" stroke-width="1.200"/></svg></button>
      <i class="s"></i>
      <button class="tool" aria-label="Viewports"><svg viewBox="0 0 20 20"><path d="M2 2h8v8H2z" fill="#fff" stroke="#444" stroke-width="1.600"/><path d="M9 10h9v9H9zM13.500 10v9M9 14.500h9" fill="#fff" stroke="#444" stroke-width="1.600"/><path d="M12 3l4 4M16 3v4" stroke="#d2a030" stroke-width="1.800"/></svg></button>
      <i class="s"></i>
      <button class="tool" aria-label="Rotate"><svg viewBox="0 0 20 20"><path d="M3 12a7 7 0 0 1 4-9M17 8a7 7 0 0 1-4 9" fill="none" stroke="#cfa033" stroke-width="2"/><path d="M7 3a7 7 0 0 1 10 5M13 17a7 7 0 0 1-10-5" fill="none" stroke="#555" stroke-width="2"/></svg></button>
      <button class="tool slim" aria-label="Rotate options"><svg class="sm"><use href="#down"/></svg></button>
      <button class="tool" aria-label="Pan"><svg viewBox="0 0 20 20"><path d="M10 1l4 4H6zM10 19l4-4H6zM1 10l4-4v8zM19 10l-4-4v8z" fill="#cf9f2e"/><path d="M10 5v3M10 12v3M5 10h3M12 10h3" stroke="#444" stroke-width="2"/></svg></button>
      <button class="tool" aria-label="Zoom"><svg viewBox="0 0 20 20" color="#5a5a5a"><use href="#mag"/><path d="M8.500 3.500l3 3h-6zM8.500 13.500l3-3h-6z" fill="#cf9a22"/><path d="M5 8.500h7" stroke="#cf9a22"/></svg></button>
      <button class="tool" aria-label="Box zoom"><svg viewBox="0 0 20 20" color="#5a5a5a"><use href="#mag"/><path d="M5 8.500h7M8.500 5v7" stroke="#cf9a22" stroke-width="2.500"/></svg></button>
      <button class="tool" aria-label="Zoom to fit"><svg viewBox="0 0 20 20" color="#5a5a5a"><use href="#mag"/><path d="M5 7l3.500-2L12 7v4l-3.500 2L5 11z" fill="#6f95cf" stroke="#345"/></svg></button>
      <button class="tool" aria-label="Zoom to selection"><svg viewBox="0 0 20 20" color="#5a5a5a"><use href="#mag"/><path d="M5 7l3.500-2L12 7v4l-3.500 2L5 11z" fill="#4fb45c" stroke="#354"/></svg></button>
      <i class="s"></i>
      <span class="lbl">Select</span>
      <button class="drop mode"><svg viewBox="0 0 20 20"><path d="M0 0h8v8H0z" fill="#f00c0c"/><path d="M6 4l12 8-5 1 4 6-3 1-3-6-4 3z" fill="#484848"/></svg>Mode<svg class="sm"><use href="#down"/></svg></button>
      <button class="tool" aria-label="Vertex"><svg><use href="#selcube"/></svg></button>
      <button class="tool" aria-label="Edge"><svg viewBox="0 0 20 20"><use href="#selcube"/><path d="M3 5l4-3" stroke="#17b82b" stroke-width="3"/></svg></button>
      <button class="tool on" aria-label="Face"><svg viewBox="0 0 20 20"><use href="#selcube"/><path d="M3 6l3-4h11l-3 4z" fill="#0ee02a" stroke="#363"/></svg></button>
      <button class="tool" aria-label="Body"><svg viewBox="0 0 20 20"><path d="M3 5l3-3h11v12l-3 4H3z" fill="#0ce42b" stroke="#274b2a" stroke-width="1.300"/><path d="M3 5h11v13M14 5l3-3" fill="none" stroke="#274b2a" stroke-width="1.200"/><path d="M8 8l4 4H10l1 3-2 .5-1-3z" fill="#154"/></svg></button>
      <button class="tool" aria-label="Node"><svg><use href="#meshcube"/></svg></button>
      <button class="tool" aria-label="Element face"><svg viewBox="0 0 20 20"><use href="#meshcube"/><path d="M3 6l3-4h11l-3 4z" fill="#2f9a45" opacity=".8"/></svg></button>
      <button class="tool" aria-label="Element"><svg viewBox="0 0 20 20"><use href="#meshcube"/><path d="M7 5h7v8H7z" fill="#2f9a45" opacity=".6"/></svg></button>
      <button class="tool" aria-label="Coordinates"><svg viewBox="0 0 20 20"><text x="10" y="6" class="xyz">X.Y.Z</text><path d="M7 8l7 3-3 1 2 6-2 .5-2-5-2 2z" fill="#d6a02e"/></svg></button>
      <button class="tool" aria-label="Label"><svg viewBox="0 0 20 20"><path d="M2 2h14l2 3-2 4H2z" fill="#fff" stroke="#555" stroke-width="1.300"/><text x="9" y="8" class="xyz">100</text><path d="M8 9l6 3-3 1 2 5-2 .5-2-4-2 2z" fill="#d6a02e"/></svg></button>
      <i class="s"></i>
      <button class="drop clip"><svg viewBox="0 0 20 20"><path d="M2 1h15v18H2z" fill="#d3a63b" stroke="#6b6142" stroke-width="1.300"/><path d="M2 1h15v4H2z" fill="#555"/><path d="M5 2h9v2H5z" fill="#eee"/></svg>Clipboard<svg class="sm"><use href="#down"/></svg></button>
      <span class="lbl empty">[ Empty ]</span>
      <i class="s"></i>
      <button class="drop ext"><svg viewBox="0 0 20 20"><path d="M2 6l8-4 8 4v8l-8 5-8-5z" fill="#fafafa" stroke="#555" stroke-width="1.400"/><path d="M2 6l8 4v9l-8-5z" fill="#12cf2c" stroke="#333"/><path d="M10 10l8-4M3 4q6-6 12-1" fill="none" stroke="#777" stroke-width="1.300"/></svg>Extend<svg class="sm"><use href="#down"/></svg></button>
      <button class="drop by"><svg viewBox="0 0 20 20"><path d="M10 1a5 5 0 0 1 5 5q0 3-5 9Q5 9 5 6a5 5 0 0 1 5-5z" fill="#d7a22f"/><circle cx="10" cy="6" r="2" fill="#fff"/><path d="M4 13l-3 5h18l-3-5" fill="none" stroke="#aaa" stroke-width="2"/></svg>Select By<svg class="sm"><use href="#down"/></svg></button>
      <button class="drop cv"><svg viewBox="0 0 20 20"><path d="M5 6l4-3 9 1v9l-4 4-9-1z" fill="#10cc2c" stroke="#264a28" stroke-width="1.400"/><path d="M5 6l9 1 4-3M14 7v10" fill="none" stroke="#264a28"/><path d="M0 8h7M4 5l4 3-4 3" fill="none" stroke="#cfa034" stroke-width="1.800"/></svg>Convert<svg class="sm"><use href="#down"/></svg></button>
      <svg class="more"><use href="#down"/></svg>
    </div>

    <div class="viewport">
      <svg class="scene" viewBox="0 0 1500 733" preserveAspectRatio="xMidYMid meet">
        <defs>
          <linearGradient id="brV" x1="0" x2="1"><stop offset="0" stop-color="#66523f"/><stop offset=".35" stop-color="#7d6650"/><stop offset=".8" stop-color="#b28f70"/><stop offset="1" stop-color="#a88768"/></linearGradient>
          <linearGradient id="brD" x1="0" y1="0" x2="0" y2="1"><stop offset="0" stop-color="#a5835f"/><stop offset=".3" stop-color="#c9a077"/><stop offset=".5" stop-color="#f3cfa0"/><stop offset=".6" stop-color="#d1a77d"/><stop offset="1" stop-color="#8a6c50"/></linearGradient>
          <linearGradient id="brB" gradientUnits="userSpaceOnUse" x1="689" y1="207" x2="628" y2="312"><stop offset="0" stop-color="#8f7258"/><stop offset=".5" stop-color="#bb9674"/><stop offset="1" stop-color="#efc89a"/></linearGradient>
          <linearGradient id="brE" gradientUnits="userSpaceOnUse" x1="689" y1="207" x2="628" y2="312"><stop offset="0" stop-color="#84694f"/><stop offset="1" stop-color="#a07e5f"/></linearGradient>
          <linearGradient id="grV" x1="0" x2="1"><stop offset="0" stop-color="#3f4f3b"/><stop offset=".35" stop-color="#51654b"/><stop offset=".8" stop-color="#7b9771"/><stop offset="1" stop-color="#74906b"/></linearGradient>
          <linearGradient id="grD" x1="0" y1="0" x2="0" y2="1"><stop offset="0" stop-color="#789470"/><stop offset=".3" stop-color="#97b68c"/><stop offset=".5" stop-color="#c4e4b8"/><stop offset=".6" stop-color="#9fbf95"/><stop offset="1" stop-color="#64805d"/></linearGradient>
          <linearGradient id="grB" gradientUnits="userSpaceOnUse" x1="689" y1="207" x2="628" y2="312"><stop offset="0" stop-color="#5a7255"/><stop offset=".5" stop-color="#86a47d"/><stop offset="1" stop-color="#bcdcb0"/></linearGradient>
          <linearGradient id="grE" gradientUnits="userSpaceOnUse" x1="689" y1="207" x2="628" y2="312"><stop offset="0" stop-color="#52674d"/><stop offset="1" stop-color="#769370"/></linearGradient>
          <linearGradient id="red" x1="0" y1="0" x2="0" y2="1"><stop offset="0" stop-color="#8f1314"/><stop offset=".25" stop-color="#c42022"/><stop offset=".45" stop-color="#b11b1d"/><stop offset=".75" stop-color="#640c0d"/><stop offset="1" stop-color="#430707"/></linearGradient>
          <radialGradient id="ball" cx=".4" cy=".3"><stop offset="0" stop-color="#7fe6e2"/><stop offset=".6" stop-color="#25b5b2"/><stop offset="1" stop-color="#107f7e"/></radialGradient>
        </defs>

        <!-- brown hanger -->
        <g>
          <rect x="676" y="93" width="27" height="118" fill="url(#brV)"/>
          <ellipse cx="689.500" cy="93" rx="13.500" ry="7.600" fill="#71593f" stroke="#f2cfa8" stroke-width="1.200"/>
          <path d="M689 207C689 254 668 290 628 312" fill="none" stroke="url(#brE)" stroke-width="27"/>
          <path d="M690 207C690 254 668 290 627 311" fill="none" stroke="url(#brB)" stroke-width="19" opacity=".4"/>
          <path d="M690 207C690 254 668 290 627 311" fill="none" stroke="url(#brB)" stroke-width="12" opacity=".4"/>
          <path d="M690 212C690 254 667 288 626 310" fill="none" stroke="url(#brB)" stroke-width="5" opacity=".6"/>
          <path d="M676 205q13 11 27 0" fill="none" stroke="#f2cfa8" stroke-width="1.200"/>
          <g transform="translate(492 390) rotate(-30)"><rect y="-13.500" width="157" height="27" fill="url(#brD)"/><ellipse rx="7.800" ry="13.500" fill="#c69f7e" stroke="#f6d5ae" stroke-width="1.200"/><path d="M-6 1h12" stroke="#fbe3c6" stroke-width="3"/><path d="M157-13.500q8 13 0 27M146-13.500q9 2 11 0" fill="none" stroke="#f2cfa8" stroke-width="1.200"/></g>
        </g>
        <!-- green hanger -->
        <g transform="translate(257 149)">
          <rect x="676" y="93" width="27" height="118" fill="url(#grV)"/>
          <ellipse cx="689.500" cy="93" rx="13.500" ry="7.600" fill="#4f6449" stroke="#c5e2bd" stroke-width="1.200"/>
          <path d="M689 207C689 254 668 290 628 312" fill="none" stroke="url(#grE)" stroke-width="27"/>
          <path d="M690 207C690 254 668 290 627 311" fill="none" stroke="url(#grB)" stroke-width="19" opacity=".4"/>
          <path d="M690 207C690 254 668 290 627 311" fill="none" stroke="url(#grB)" stroke-width="12" opacity=".4"/>
          <path d="M690 212C690 254 667 288 626 310" fill="none" stroke="url(#grB)" stroke-width="5" opacity=".6"/>
          <path d="M676 205q13 11 27 0" fill="none" stroke="#c5e2bd" stroke-width="1.200"/>
          <g transform="translate(492 390) rotate(-30)"><rect y="-13.500" width="157" height="27" fill="url(#grD)"/><ellipse rx="7.800" ry="13.500" fill="#8fae86" stroke="#cdeac4" stroke-width="1.200"/><path d="M-6 1h12" stroke="#def5d6" stroke-width="3"/><path d="M157-13.500q8 13 0 27" fill="none" stroke="#cdeac4" stroke-width="1.200"/></g>
        </g>
        <!-- channel beam -->
        <g stroke-linejoin="round">
          <path d="M650 104l15-9 286 165-15 10z" fill="#9bbcb0" stroke="#b9dcd0" stroke-width="1"/>
          <path d="M650 104l286 166v34.500L650 138.500z" fill="#3e4a45" stroke="#a9cdc2" stroke-width="1.200"/>
          <path d="M651 107l285 166" stroke="#8fb3a7" stroke-width="2.500"/>
          <path d="M651 105.500l285 166" stroke="#46534e" stroke-width="1"/>
          <path d="M936 270l15-10v36l-15 8.500z" fill="#67877c" stroke="#c9ebe0" stroke-width="1.400"/>
          <path d="M938 274l11-8v23l-11-4z" fill="#42544e"/>
          <path d="M936 304l15-8-12-7-3 3z" fill="#a8c8bd"/>
          <path d="M685 119l24 13v40l-24-13z" fill="#3a4547" stroke="#bcd6cf" stroke-width="1.200"/>
          <path d="M685 119l24 13v10l-24-13z" fill="#2d3942"/>
          <path d="M875 229l26 14v41l-26-15z" fill="#444b49" stroke="#bcd6cf" stroke-width="1.200"/>
          <path d="M875 229l26 14v9l-26-14z" fill="#353c3e"/>
          <g fill="#5d6f69" stroke="#d9f0ea" stroke-width="1.300"><ellipse cx="664" cy="130" rx="2" ry="3"/><ellipse cx="689" cy="144" rx="2" ry="3"/><ellipse cx="704" cy="153.600" rx="2" ry="3"/><ellipse cx="880" cy="254.500" rx="2" ry="3"/><ellipse cx="894.600" cy="263" rx="2" ry="3"/><ellipse cx="921" cy="277.600" rx="2" ry="3"/><path d="M694 130q3-5 6 3M884 240q3-5 6 3" fill="none"/></g>
        </g>
        <!-- red bar -->
        <g transform="translate(417 222) rotate(30)">
          <ellipse rx="7.800" ry="13.500" fill="url(#red)" stroke="#f3e0b0" stroke-width="1.500"/>
          <rect y="-13.500" width="674" height="27" fill="url(#red)"/>
          <ellipse cx="675" rx="7.800" ry="13.500" fill="#a9a15d" stroke="#f3ea9c" stroke-width="1.600"/>
          <ellipse cx="677" cy="-4" rx="4" ry="6" fill="#7f7a4c" opacity=".7"/>
        </g>
        <g fill="#6c3a18" stroke="#efe06a" stroke-width="1.400"><ellipse cx="580.500" cy="306" rx="2.600" ry="2"/><ellipse cx="838" cy="454" rx="2.600" ry="2"/></g>
        <path d="M666 223h12M672 217v12" stroke="#3c56b0" stroke-width="1" opacity=".6"/>
        <!-- load markers -->
        <g>
          <path d="M482 250h5v42h-5z" fill="#9a1116"/><ellipse cx="484.500" cy="291" rx="8" ry="3.500" fill="#c4161d"/><path d="M476.500 291h16L484.500 308z" fill="#8c0f14"/>
          <path d="M453 236h23l9 13-9 12h-23z" fill="#f92f34" stroke="#250505" stroke-width="1.200"/><text x="456" y="254" class="flag">B</text>
          <path d="M932.500 511h5v38h-5z" fill="#9a1116"/><ellipse cx="935" cy="550" rx="8" ry="3.500" fill="#c4161d"/><path d="M927 550h16L935 567z" fill="#8c0f14"/>
          <path d="M901 496h25l10 13-10 12h-25z" fill="#f92f34" stroke="#250505" stroke-width="1.200"/><text x="905" y="515" class="flag">A</text>
        </g>
        <!-- ruler -->
        <rect x="524.500" y="674.500" width="450" height="13" fill="#fff" fill-opacity=".6" stroke="#000"/>
        <path d="M524 675h113v13H524zM749 675h113v13H749z" fill="#000"/>
        <g class="ruler"><text x="525" y="670">0,00</text><text x="748" y="670">250,00</text><text x="993" y="670">500,00 (mm)</text><text x="636" y="707">125,00</text><text x="862" y="707">375,00</text></g>
      </svg>

      <div class="legend">
        <strong>A: Static Structural</strong>
        <span>Remote Force pos 1L</span>
        <span>Time: 1, s</span>
        <span>24/04/2020 17:29</span>
        <div class="load"><b>A</b>Remote Force pos 1R: 650, N</div>
        <div class="load"><b>B</b>Remote Force pos 1L: 650, N</div>
      </div>
      <div class="brand"><strong>ANSYS</strong><span class="ver">2019 <b>R2</b></span><span class="edition"><span>A</span><span>C</span><span>A</span><span>D</span><span>E</span><span>M</span><span>I</span><span>C</span></span></div>
      <svg class="triad" width="160" height="144" viewBox="0 0 160 144">
        <path d="M77 94L35 118" stroke="#0b0bb0" stroke-width="5"/><path d="M19 128l11-17q8 1 9 16z" fill="#0808b8"/>
        <path d="M77 94l40 23" stroke="#b30d0d" stroke-width="5"/><path d="M136 128l-10-17q-8 2-10 16z" fill="#cf0b0b"/>
        <path d="M77 94V42" stroke="#064b06" stroke-width="5"/><path d="M77 26l9 17q-9 7-18 0z" fill="#087508"/>
        <circle cx="77" cy="94" r="8" fill="url(#ball)"/>
        <text x="76" y="16" fill="#2fa84a">Y</text><text x="145" y="134" fill="#e23b3b">X</text><text x="9" y="134" fill="#2b2bcf">Z</text>
      </svg>
    </div>

    <div class="bottom">
      <section class="graph">
        <div class="phead"><span>Graph</span><i class="dots"></i><svg class="h-dn"><use href="#down"/></svg><svg class="h-pin"><use href="#pin"/></svg><svg class="h-x"><use href="#close"/></svg></div>
        <div class="plot"><i></i></div>
        <div class="btabs"><button>Messages</button><button class="active">Graph</button></div>
      </section>
      <section class="tabdata">
        <div class="phead"><span>T.</span><svg class="h-dn"><use href="#down"/></svg><svg class="h-pin"><use href="#pin"/></svg><svg class="h-x"><use href="#close"/></svg></div>
        <div class="stepwrap">
          <table class="steps"><tr><th></th><th>Steps</th></tr><tr><td>1</td><td>1</td></tr></table>
          <div class="mini"><svg><use href="#up-c"/></svg><svg><use href="#dn-c"/></svg></div>
        </div>
      </section>
    </div>
  </section>
</main>

<footer class="status">
  <span>Multiple Selection (2 Objects Selected)</span>
  <div class="stats">
    <span class="msg"><svg width="18" height="20" viewBox="0 0 18 20"><path d="M1 6h13v8H7l-3 5v-5H1z" fill="#f1c84a"/><path d="M10 0l7 13H3z" fill="#d5201c" stroke="#8d0f0c" stroke-width=".8"/><path d="M10 4v5M10 10v2" stroke="#fff" stroke-width="1.800"/></svg>5 Messages</span>
    <span class="nosel">No Selection</span>
    <span class="units"><svg width="10" height="8" viewBox="0 0 10 8"><path d="M5 0l5 8H0z" fill="#fff"/></svg>Metric (mm, kg, N, s, mV, mA)</span>
    <span>Degrees</span><span>rad/s</span><span>Celsius</span>
  </div>
</footer>

<footer class="taskbar">
  <button class="sys" aria-label="Start"><svg width="20" height="20" viewBox="0 0 20 20"><path d="M0 3l8-1v7H0zM9 2l11-2v9H9zM0 10h8v7.500l-8-1zM9 10h11v10L9 18z" fill="#fff"/></svg></button>
  <button class="sys" aria-label="Search"><svg width="22" height="22" viewBox="0 0 22 22"><circle cx="13" cy="8" r="6.500" fill="none" stroke="#fff" stroke-width="1.500"/><path d="M8.500 13L2 20" stroke="#fff" stroke-width="1.500"/></svg></button>
  <button class="sys" aria-label="File Explorer"><svg width="20" height="18" viewBox="0 0 20 18"><path d="M1 1h6l2 2h10v13H1z" fill="#f2c94e"/><path d="M1 5h18v11H1z" fill="#ffe28a"/><path d="M4 17v-6h12v6h-3v-3H7v3z" fill="#3a9ad9"/></svg></button>
  <button class="task t1"><svg viewBox="0 0 20 20"><path d="M0 0h20v20H0z" fill="url(#wbg)"/><path d="M7 0h6l7 20h-6L10 8 6 20H0z" fill="#777" opacity=".6"/><text x="10" y="14" class="mark">WB</text></svg><span>dominadas_correccio...</span></button>
  <button class="task t2"><svg viewBox="0 0 20 20"><path d="M0 0h20v20H0z" fill="url(#wbg)"/><path d="M7 0h6l7 20h-6L10 8 6 20H0z" fill="#777" opacity=".6"/><text x="10" y="14" class="mark">WB</text></svg><span>dominadas_2 - Workb...</span></button>
  <button class="task t3"><svg viewBox="0 0 20 20"><path d="M0 0h20v20H0z" fill="#41254a"/><path d="M5 0h10l4 20H1z" fill="url(#purple)"/><text x="10" y="14" class="mark">M</text></svg><span>A : Static Structural - ...</span></button>
  <div class="tray">
    <svg width="16" height="10" viewBox="0 0 16 10"><path d="M1 9l7-7 7 7" fill="none" stroke="#fff" stroke-width="1.500"/></svg>
    <svg width="20" height="18" viewBox="0 0 20 18"><path d="M4 2h15v11H4M11 13v4M7 17h9" fill="none" stroke="#fff" stroke-width="1.400"/><path d="M1 1h4v5H1zM3 6v9" fill="#111" stroke="#fff" stroke-width="1.300"/></svg>
    <svg width="22" height="18" viewBox="0 0 22 18"><path d="M1 6h3l5-4v14l-5-4H1z" fill="none" stroke="#fff" stroke-width="1.300"/><path d="M12 6q2 3 0 6M15 4q4 5 0 10M18 2q5 7 0 14" fill="none" stroke="#fff" stroke-width="1.300"/></svg>
    <time>17:29</time>
  </div>
</footer>
</body>
</html>
```
FILE: styles.css
```css
* { box-sizing: border-box; }
html, body { height: 100%; }
body {
  margin: 0;
  display: flex;
  flex-direction: column;
  min-height: 0;
  overflow: hidden;
  background: #eeeef2;
  color: #1e1e1e;
  font: 13px/20px "Open Sans", "Noto Sans", sans-serif;
}
button, input, select { font: inherit; color: inherit; }
button { padding: 0; border: 0; background: none; white-space: nowrap; }
.sprite { position: absolute; width: 0; height: 0; }
.plain { display: flex; align-items: center; }
.ic { width: 18px; height: 18px; flex: none; }
.sm { width: 9px; height: 5px; flex: none; color: #666; }
.mark { font: bold 10px "Open Sans", sans-serif; fill: #fff; text-anchor: middle; }
.abc { font: bold 6px "Open Sans", sans-serif; fill: #a3871b; text-anchor: middle; }
.xyz { font: bold 7px "Open Sans", sans-serif; fill: #777; text-anchor: middle; }
.mft { font: bold 17px "Open Sans", sans-serif; fill: #4a4739; text-anchor: middle; }
.mft-s { font: bold 9px "Open Sans", sans-serif; fill: #4a4739; text-anchor: middle; }

/* title bar */
.titlebar { flex: none; height: 32px; position: relative; display: flex; align-items: center; padding-left: 10px; }
.app-icon { width: 20px; height: 22px; }
.tb-sep { width: 1px; height: 28px; background: #d0d0d6; margin: 0 7px 0 9px; }
.qat { margin-left: 6px; }
.context-tab { align-self: stretch; width: 110px; margin-left: 71px; border-top: 5px solid #2b579a; background: #d3e1f2; color: #3c66ac; text-align: center; line-height: 28px; }
.titlebar h1 { position: absolute; left: 0; right: 0; top: 8px; margin: 0; text-align: center; font-size: 13px; line-height: 20px; font-weight: 400; color: #4a4a4a; }
.winbtns { margin-left: auto; display: flex; gap: 30px; align-items: center; padding-right: 15px; z-index: 1; }

/* tabs */
.tabs { flex: none; height: 33px; display: flex; align-items: stretch; border-bottom: 1px solid #c6c6ca; }
.file { width: 70px; margin: 1px 10px 1px 0; background: #0173c7; color: #fff; }
.tab { padding: 3px 18px 0; }
.tab.active { position: relative; width: 70px; padding: 3px 0 0; margin-bottom: -1px; background: #fafafa; border: 1px solid #c6c6ca; border-bottom: 0; }
.quick { margin-left: auto; display: flex; align-items: center; gap: 7px; padding-right: 6px; }
.quick input { width: 200px; height: 26px; border: 1px solid #c9cacf; background: #fff; padding: 2px 4px 0; }
.quick .help { width: 26px; }
input::placeholder { color: #a0a0a0; opacity: 1; }

/* ribbon */
.ribbon { flex: none; display: flex; height: 111px; background: #fafafa; border-bottom: 1px solid #c6c6ca; padding-top: 6px; }
.group { position: relative; height: 96px; border-right: 1px solid #cfcfd2; }
.group h2 { margin: 0; font-size: 13px; line-height: 20px; font-weight: 400; text-align: center; }
.cols { display: grid; height: 78px; justify-items: start; }
.col { display: flex; flex-direction: column; }
.item { display: flex; align-items: center; height: 26px; gap: 3px; }
.item .sm { margin-left: -2px; }
.off, .off .item { color: #9a9a9a; }
.big { display: flex; flex-direction: column; align-items: center; line-height: 16px; padding-top: 3px; }
.big > svg:first-child { height: 38px; margin-bottom: 4px; }
.dn { width: 8px; height: 5px; color: #777; margin-top: 8px; }
.g-outline { width: 217px; padding-left: 12px; }
.g-outline .cols { grid-template-columns: 68px 62px 1fr; }
.g-outline .big, .g-solve .big { width: 60px; }
.g-outline h2 { padding-right: 8px; }
.g-solve { width: 216px; padding-left: 7px; }
.g-solve .cols { grid-template-columns: 146px 1fr; }
.g-solve h2 { padding-right: 6px; }
.g-insert { width: 421px; padding-left: 7px; }
.g-insert .cols { grid-template-columns: 58px 143px 96px 1fr; }
.g-insert .big { width: 54px; }
.g-insert h2 { padding-right: 8px; }
.g-tools { width: 593px; padding-left: 10px; }
.g-tools .cols { grid-template-columns: 48px 72px 73px 100px 159px 1fr; }
.g-tools .big { width: 48px; }
.g-tools .big:nth-child(2), .g-tools .big:nth-child(3) { width: 72px; }
.g-tools .big:nth-child(3) { width: 68px; }
.g-tools h2 { padding-right: 16px; }
.g-layout { width: 189px; padding-left: 10px; }
.g-layout .cols { grid-template-columns: 54px 1fr; }
.g-layout .big { width: 48px; }
.g-layout h2 { padding-right: 16px; }
.launch { position: absolute; right: 5px; bottom: 4px; }
.selwrap { position: relative; display: flex; align-items: center; background: #fff; border: 1px solid #c9cacf; }
.selwrap select { appearance: none; border: 0; background: transparent; width: 100%; height: 24px; padding: 0 4px; }
.selwrap .sm { position: absolute; right: 5px; }
.form .selwrap { width: 150px; height: 26px; }
.form label { display: flex; align-items: center; }
.check { height: 26px; gap: 8px; padding-left: 3px; }
.check input { appearance: none; margin: 0; width: 16px; height: 16px; border: 1px solid #b9b9bd; background: #fff; display: grid; place-items: center; }
.check input::after { content: ""; width: 4px; height: 8px; border: solid #555; border-width: 0 2px 2px 0; transform: rotate(45deg); }
.cores { gap: 3px; padding-left: 2px; }
.cores input { width: 60px; height: 26px; border: 1px solid #c9cacf; background: #fff; padding: 0 4px; }

/* work area */
.work { flex: 1; min-height: 0; display: flex; }
.left { flex: none; width: 415px; display: flex; flex-direction: column; min-height: 0; }
.right { flex: 1; min-width: 0; margin-left: 5px; display: flex; flex-direction: column; }
.phead { flex: none; height: 26px; display: flex; align-items: center; padding: 0 9px 0 6px; border: 1px solid #cbccd6; border-bottom: 0; color: #4a4a4a; font-size: 14px; white-space: nowrap; }
.dots, .grip { background-image: radial-gradient(circle at 1px 1px, #c2c2c8 1px, transparent 1px), radial-gradient(circle at 3px 3px, #c2c2c8 1px, transparent 1px); background-size: 4px 4px; }
.dots { flex: 1; height: 8px; margin: 0 4px 0 5px; }
.grip { flex: none; width: 6px; height: 24px; }
.phead svg { flex: none; }
.h-dn { width: 11px; height: 7px; color: #222; }
.h-pin { width: 10px; height: 16px; margin-left: 9px; }
.h-max { width: 14px; height: 14px; margin-left: 9px; }
.h-x { width: 12px; height: 12px; margin-left: 7px; }
.outline { flex: none; display: flex; flex-direction: column; }
.filter { height: 35px; display: flex; align-items: center; padding-left: 12px; }
.filter .selwrap { width: 126px; height: 28px; margin-left: 9px; }
.filter input { width: 112px; height: 28px; border: 1px solid #cbccd6; background: #fff; padding: 0 4px; margin-right: 7px; font-size: 14px; }
.filter select { font-size: 14px; }
.more { width: 9px; height: 5px; color: #222; margin: 12px 0 0 7px; }
.treewrap { display: flex; height: 421px; }
.tree { flex: 1; background: #fff; overflow: hidden; padding-left: 48px; font-family: "DejaVu Sans Condensed", "Noto Sans", sans-serif; color: #111; }
.row { display: flex; align-items: center; height: 20px; white-space: nowrap; }
.row i { flex: none; position: relative; height: 20px; }
.g { width: 34px; }
.g.v, .t { background: repeating-linear-gradient(#999 0 1px, transparent 1px 2px) left / 1px 100% no-repeat; }
.t { width: 18px; }
.t.e { background-size: 1px 50%; background-position: left top; }
.t::before { content: ""; position: absolute; left: 0; right: 0; top: 10px; height: 1px; background: repeating-linear-gradient(90deg, #999 0 1px, transparent 1px 2px); }
.x::after { content: "\2212"; position: absolute; left: -5px; top: 5px; width: 11px; height: 11px; border: 1px solid #888; background: #fff; font: 11px/9px "Open Sans", sans-serif; text-align: center; }
.x.plus::after { content: "+"; }
.st { width: 11px; height: 14px; margin-top: 6px; flex: none; }
.row .ic { margin: 0 4px 0 1px; }
.row span { padding: 0 2px; height: 20px; line-height: 20px; }
.row .b { font-weight: 700; font-size: 14px; }
.row .hl { background: #efefef; padding-right: 4px; }
.row .cur { background: #ffa50f; line-height: 18px; height: 19px; }
.vbar { flex: none; width: 20px; background: #f0f0f0; display: flex; flex-direction: column; align-items: center; padding: 7px 0; }
.vbar svg { width: 10px; height: 8px; flex: none; }
.vbar i { width: 18px; background: #cdcdcd; }
.low i { flex: none; height: 198px; margin: auto 0 8px; }
.high i { flex: none; height: 230px; margin: 7px 0 auto; }
.hbar { height: 19px; display: flex; align-items: center; padding: 0 28px 0 6px; background: #f0f0f0; }
.hbar svg { width: 8px; height: 10px; flex: none; }
.hbar i { width: 311px; height: 19px; background: #cdcdcd; margin: 0 auto 0 7px; }
.details { flex: 1; min-height: 0; margin-top: 5px; display: flex; flex-direction: column; overflow: hidden; }
.gridwrap { flex: 1; min-height: 0; display: flex; }
.gridclip { flex: 1; overflow: hidden; background: #fff; padding-right: 1px; }
.props { width: 100%; table-layout: fixed; border-collapse: collapse; line-height: 16px; color: #111; }
.c0 { width: 17px; }
.c1 { width: 122px; }
.props tr { height: 23px; }
.props tr:nth-child(even) { height: 22px; }
.props td, .props th { border: 1px solid #a6a6a6; padding: 0 1px 0 4px; text-align: left; white-space: nowrap; overflow: hidden; }
.props .gut { border: 0; padding: 0 0 0 3px; }
.props .ro { background: #e7e6e3; }
.props label { display: flex; align-items: center; gap: 4px; }
.props input { appearance: none; margin: 0; width: 15px; height: 15px; border: 1px solid #c9c9c9; background: #fff; }
.box { display: block; width: 11px; height: 11px; border: 1px solid #999; background: linear-gradient(#333, #333) center / 5px 1px no-repeat; }

/* graphics toolbar */
.toolbar { flex: none; height: 33px; display: flex; align-items: center; padding-left: 17px; font-size: 14px; white-space: nowrap; overflow: hidden; }
.toolbar .grip { margin-right: 4px; }
.tool { flex: none; width: 27px; height: 27px; display: grid; place-items: center; border: 1px solid transparent; }
.tool svg { width: 20px; height: 20px; }
.tool .sm, .drop .sm { width: 8px; height: 5px; }
.tool.slim { width: 14px; }
.tool.on { border: 2px solid #4d9cf5; }
.s { flex: none; width: 1px; height: 26px; background: #d3d3da; margin: 0 4px; }
.lbl { margin: 0 8px 0 6px; }
.drop { display: flex; align-items: center; gap: 2px; }
.drop .sm { margin-left: -1px; }
.drop svg:first-child { width: 20px; height: 20px; }
.mode { margin-right: 12px; }
.clip { margin-left: 6px; }
.empty { margin: 0 4px 0 18px; }
.ext { margin-left: 3px; }
.by, .cv { margin-left: 16px; }
.toolbar .more { margin-top: 14px; margin-left: 12px; }

/* viewport */
.viewport { flex: 1; min-height: 0; position: relative; overflow: hidden; background: linear-gradient(#698bdd, #fff); color: #0b0b1c; }
.scene { position: absolute; inset: 0; width: 100%; height: 100%; }
.flag { font: 15px "Open Sans", sans-serif; fill: #200; }
.ruler text { font: 13px "Open Sans", sans-serif; text-anchor: middle; fill: #000; }
.legend { position: absolute; left: 20px; top: 19px; display: flex; flex-direction: column; font-size: 14px; }
.load { display: flex; align-items: center; gap: 7px; height: 21px; margin-top: 4px; }
.load:nth-of-type(1) { margin-top: 19px; }
.load b { width: 21px; height: 21px; border: 1px solid #000; background: #fb2d30; text-align: center; line-height: 19px; }
.brand { position: absolute; right: 29px; top: 13px; width: 104px; display: flex; flex-direction: column; align-items: flex-end; color: #fff; }
.brand strong { font-size: 31px; line-height: 34px; }
.ver { font-size: 20px; line-height: 26px; }
.edition { align-self: stretch; display: flex; justify-content: space-between; margin-top: 4px; padding-top: 4px; border-top: 2px solid #cfdaf6; font-size: 16px; line-height: 22px; color: #e6edfb; }
.triad { position: absolute; right: 30px; bottom: 52px; font-size: 14px; }

/* bottom panes */
.bottom { flex: none; height: 76px; display: flex; gap: 6px; padding-top: 5px; }
.graph { flex: 1; min-width: 0; display: flex; flex-direction: column; }
.graph .phead { height: 25px; }
.plot { height: 22px; background: #fff; border-bottom: 1px solid #cbccd6; padding: 0 28px 0 67px; }
.plot i { display: block; height: 6px; background: #0f70c4; border-bottom: 1px solid #6c8fb0; }
.btabs { height: 24px; display: flex; color: #555; font-size: 14px; }
.btabs button { padding: 0 7px; height: 24px; }
.btabs .active { background: #f9f9fb; border: 1px solid #cbccd6; border-top: 0; color: #2b7cd0; margin-left: 1px; }
.graph .h-x { margin-left: 10px; }
.tabdata { width: 82px; }
.tabdata .phead { height: 25px; padding: 0 9px 0 4px; }
.tabdata .h-dn { margin-left: auto; }
.tabdata .h-x { margin-left: 10px; }
.stepwrap { display: flex; height: 46px; }
.steps { table-layout: fixed; border-collapse: collapse; width: 62px; height: 46px; line-height: 18px; }
.steps th, .steps td { font-weight: 400; text-align: left; padding: 0 0 0 4px; border-bottom: 1px solid #555; }
.steps tr > :first-child { width: 19px; border-right: 1px solid #555; }
.mini { flex: 1; display: flex; flex-direction: column; justify-content: space-between; align-items: center; padding: 8px 0; }
.mini svg { width: 9px; height: 8px; }

/* status */
.status { flex: none; height: 24px; display: flex; align-items: center; justify-content: space-between; padding: 2px 10px 0 4px; background: #007acc; color: #fff; font-size: 14px; white-space: nowrap; }
.stats { display: flex; gap: 15px; }
.msg, .units { display: flex; align-items: center; gap: 4px; }
.units { gap: 7px; }
.nosel { margin: 0 12px 0 6px; }

/* taskbar */
.taskbar { flex: none; height: 38px; display: flex; background: #101010; color: #fff; font-size: 14px; }
.sys { width: 46px; display: grid; place-items: center; }
.task { width: 200px; display: flex; align-items: center; gap: 4px; padding: 0 10px; border-bottom: 3px solid #76b0e0; margin-left: 2px; color: #fff; }
.task svg { width: 20px; height: 20px; flex: none; }
.t1 { background: #2a2a2a; }
.t2 { width: 191px; margin-left: 5px; padding: 0 5px; }
.t3 { background: #353535; margin-left: 5px; }
.tray { margin-left: auto; display: flex; align-items: center; gap: 11px; padding-right: 7px; border-right: 1px solid #555; margin-right: 6px; }
```
